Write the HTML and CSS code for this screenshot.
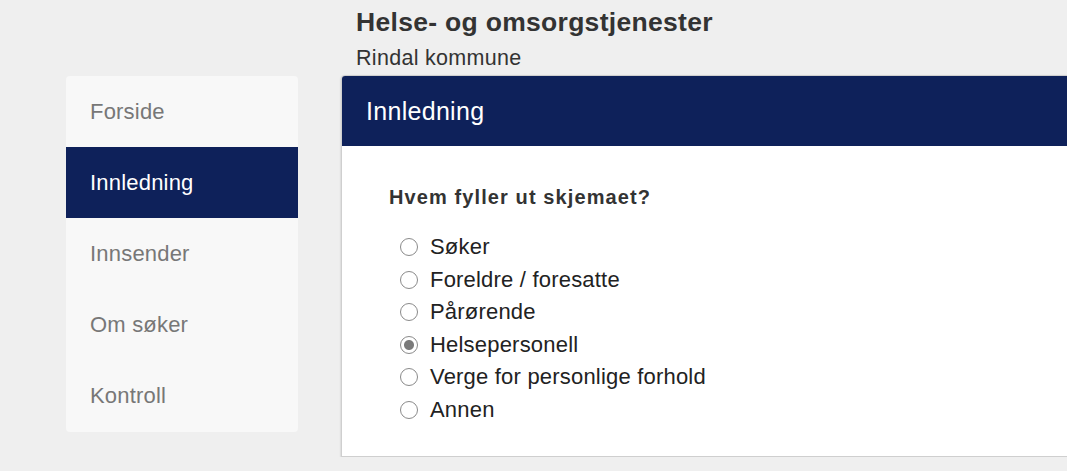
FILE: index.html
```html
<!DOCTYPE html>
<html lang="no">
<head>
<meta charset="utf-8">
<title>Helse- og omsorgstjenester</title>
<link rel="stylesheet" href="styles.css">
</head>
<body>
<div class="page">
  <div class="spacer"></div>
  <header class="head">
    <h1 class="title">Helse- og omsorgstjenester</h1>
    <div class="subtitle">Rindal kommune</div>
  </header>
  <nav class="sidebar">
    <a class="nav-item">Forside</a>
    <a class="nav-item active">Innledning</a>
    <a class="nav-item">Innsender</a>
    <a class="nav-item">Om søker</a>
    <a class="nav-item">Kontroll</a>
  </nav>
  <section class="card">
    <div class="card-head">Innledning</div>
    <div class="card-body">
      <div class="question">Hvem fyller ut skjemaet?</div>
      <div class="options">
        <label class="option"><input type="radio" name="who"><span>Søker</span></label>
        <label class="option"><input type="radio" name="who"><span>Foreldre / foresatte</span></label>
        <label class="option"><input type="radio" name="who"><span>Pårørende</span></label>
        <label class="option"><input type="radio" name="who" checked><span>Helsepersonell</span></label>
        <label class="option"><input type="radio" name="who"><span>Verge for personlige forhold</span></label>
        <label class="option"><input type="radio" name="who"><span>Annen</span></label>
      </div>
    </div>
  </section>
</div>
</body>
</html>
```

FILE: styles.css
```css
html, body {
  margin: 0;
  padding: 0;
  overflow: hidden;
}
body {
  background: #efefef;
  font-family: "Liberation Sans", Arial, sans-serif;
  color: #333;
}
.page {
  display: grid;
  grid-template-columns: 232px 760px;
  column-gap: 43px;
  padding-left: 66px;
  align-items: start;
}
.head {
  padding: 7px 0 5px 15px;
}
.title {
  margin: 0;
  font-size: 26.5px;
  line-height: 30px;
  font-weight: bold;
  letter-spacing: 0.3px;
  color: #333;
}
.subtitle {
  margin-top: 9px;
  font-size: 21.5px;
  line-height: 24px;
  letter-spacing: 0.3px;
  color: #333;
}
.sidebar {
  margin-top: 1px;
  background: #f8f8f8;
  border-radius: 4px;
  overflow: hidden;
  display: flex;
  flex-direction: column;
  padding-bottom: 1px;
}
.nav-item {
  height: 71px;
  display: flex;
  align-items: center;
  padding-left: 24px;
  font-size: 22px;
  letter-spacing: 0.2px;
  color: #777;
}
.nav-item.active {
  background: #0e215a;
  color: #fff;
}
.card {
  background: #fff;
  border: 1px solid #cfcfcf;
  border-radius: 4px 0 0 0;
  box-shadow: 0 1px 2px rgba(0,0,0,0.25);
  overflow: hidden;
  height: 380px;
}
.card-head {
  height: 70px;
  background: #0e215a;
  color: #fff;
  display: flex;
  align-items: center;
  padding-left: 24px;
  font-size: 25px;
  letter-spacing: 0.3px;
}
.card-body {
  padding: 39px 0 0 47px;
}
.question {
  font-size: 20px;
  line-height: 24px;
  font-weight: bold;
  letter-spacing: 1.1px;
  color: #333;
}
.options {
  margin-top: 22px;
  display: flex;
  flex-direction: column;
}
.option {
  display: flex;
  align-items: center;
  height: 32.5px;
  font-size: 22px;
  letter-spacing: 0.2px;
  color: #222;
}
.option input {
  appearance: none;
  -webkit-appearance: none;
  width: 18px;
  height: 18px;
  margin: 0 12px 0 11px;
  border: 1.5px solid #8a8a8a;
  border-radius: 50%;
  background: #fff;
  box-sizing: border-box;
  flex: none;
}
.option input:checked {
  background: radial-gradient(circle, #7a7a7a 0 4.5px, #fff 5.5px);
}
```
